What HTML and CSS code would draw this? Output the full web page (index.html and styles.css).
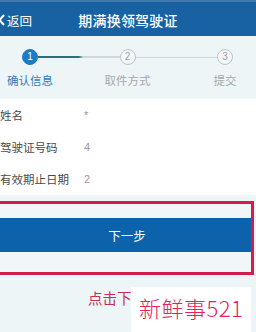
FILE: index.html
```html
<!DOCTYPE html>
<html lang="zh">
<head>
<meta charset="utf-8">
<link rel="stylesheet" href="styles.css">
</head>
<body>
<div class="page">
  <header class="topbar">
    <div class="back">
      <svg class="chev" width="7" height="12" viewBox="0 0 7 12"><path d="M6 1 L1.5 6 L6 11" fill="none" stroke="#fff" stroke-width="2"/></svg>
      <span>返回</span>
    </div>
    <div class="title">期满换领驾驶证</div>
    <div></div>
  </header>

  <section class="stepper">
    <div class="dots">
      <span class="dot active">1</span>
      <span class="line done"></span>
      <span class="dot">2</span>
      <span class="line"></span>
      <span class="dot">3</span>
    </div>
    <div class="labels">
      <span class="lab active">确认信息</span>
      <span class="lab">取件方式</span>
      <span class="lab">提交</span>
    </div>
  </section>

  <section class="form">
    <div class="row"><span class="k">姓名</span><span class="v">*</span></div>
    <div class="row"><span class="k">驾驶证号码</span><span class="v">4</span></div>
    <div class="row"><span class="k">有效期止日期</span><span class="v">2</span></div>
  </section>

  <div class="highlight">
    <button class="next">下一步</button>
  </div>

  <p class="hint">点击下一步</p>

  <div class="mark">新鲜事521</div>
</div>
</body>
</html>
```
FILE: styles.css
```css
* { box-sizing: border-box; }
html, body { margin: 0; padding: 0; }
body {
  width: 256px;
  height: 332px;
  overflow: hidden;
  background: #eef5f6;
  font-family: "Noto Sans CJK SC", "Noto Sans", sans-serif;
}
.page { position: relative; width: 256px; height: 332px; overflow: hidden; }

.topbar {
  height: 36px;
  background: #1862a4;
  border-top: 2px solid #3f78ad;
  display: grid;
  grid-template-columns: 60px 1fr 60px;
  align-items: center;
  color: #fff;
}
.back {
  display: flex;
  align-items: center;
  gap: 2px;
  margin-left: -2px;
  font-size: 12.5px;
  padding-top: 2px;
}
.chev { display: block; }
.title {
  text-align: center;
  font-size: 14px;
  font-weight: 500;
  letter-spacing: 0.2px;
  padding-top: 2px;
}

.stepper {
  height: 62px;
  padding-top: 13px;
  background: #eef5f6;
}
.dots {
  display: flex;
  align-items: center;
  padding: 0 23px 0 22px;
  height: 16px;
}
.dot {
  width: 16px;
  height: 16px;
  border-radius: 50%;
  border: 1px solid #b9c6cb;
  background: #f4f8f9;
  color: #9aa5aa;
  font-size: 10px;
  line-height: 14px;
  text-align: center;
  font-family: "Liberation Sans", sans-serif;
  flex: none;
}
.dot.active {
  background: #1e7bc6;
  border-color: #1e7bc6;
  color: #fff;
}
.line {
  flex: 1;
  height: 1px;
  background: #cfd9dc;
}
.line.done {
  height: 2px;
  background: linear-gradient(to right, #2f6f78 0%, #2f6f78 50%, #cfd9dc 55%, #cfd9dc 100%);
}
.labels {
  display: flex;
  justify-content: space-between;
  padding-right: 1px;
  margin-top: 7px;
}
.lab {
  width: 60px;
  text-align: center;
  font-size: 11.5px;
  line-height: 16px;
  color: #a3aaad;
}
.lab.active { color: #2f7cb9; }

.form {
  background: #fff;
  margin-top: 1px;
}
.row {
  height: 32px;
  display: flex;
  align-items: center;
}
.k {
  width: 84px;
  font-size: 11.5px;
  color: #4a4a4a;
}
.v {
  font-size: 11px;
  color: #9a9a9a;
  font-family: "Liberation Sans", sans-serif;
}

.highlight {
  margin: 6px 2px 0 -10px;
  height: 74px;
  border: 3px solid #d11c4c;
  padding-top: 14px;
  background: #f1f7f8;
}
.next {
  display: block;
  width: 100%;
  height: 34px;
  border: 0;
  background: #0d62ac;
  color: #fff;
  font-size: 12.5px;
  font-family: "Noto Sans CJK SC", sans-serif;
  padding: 0 0 0 10px;
}

.hint {
  margin: 13px 0 0 88px;
  font-size: 14.5px;
  line-height: 20px;
  color: #c22f56;
}

.mark {
  position: absolute;
  left: 131px;
  top: 287px;
  width: 120px;
  height: 45px;
  background: #fff;
  color: #e3225a;
  font-size: 22px;
  line-height: 40px;
  padding-left: 8px;
  font-family: "Noto Sans CJK SC", sans-serif;
  font-weight: 300;
  letter-spacing: 0.5px;
}
```
